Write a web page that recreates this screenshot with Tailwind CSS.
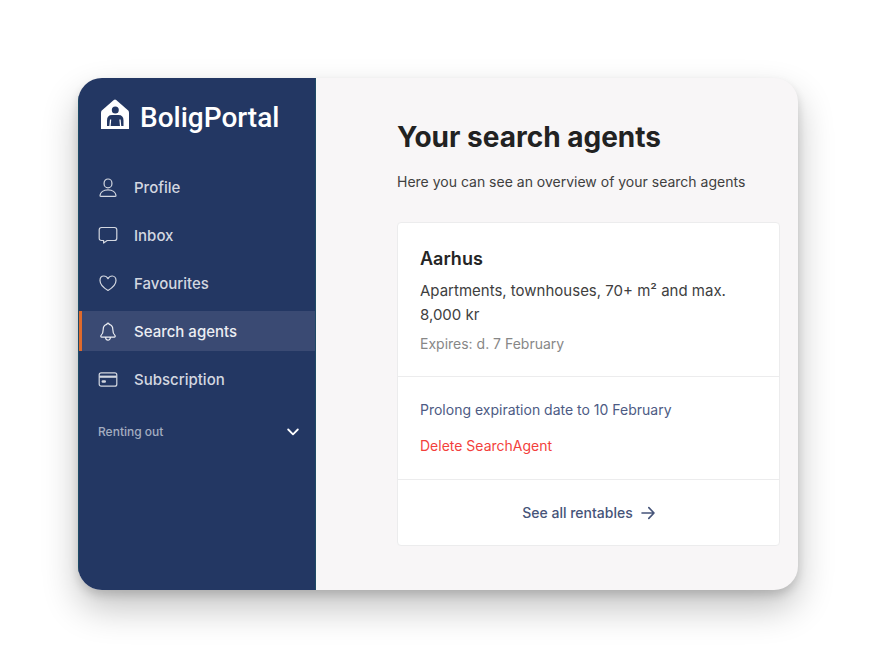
<!DOCTYPE html>
<html lang="en">
<head>
<meta charset="utf-8">
<meta name="viewport" content="width=device-width, initial-scale=1">
<title>BoligPortal – Your search agents</title>
<script src="https://cdn.jsdelivr.net/npm/@tailwindcss/browser@4"></script>
</head>
<body class="min-h-screen bg-white p-[78px] flex font-['Inter','Liberation_Sans',sans-serif]">
<div class="flex flex-1 overflow-hidden rounded-3xl bg-[#f8f6f7] shadow-[0_18px_36px_rgba(0,0,0,0.24),0_5px_10px_rgba(0,0,0,0.14)]">
  <aside class="w-[238px] shrink-0 bg-[#233763] border-x border-[#1d4a66] text-[#d3d7e0]">
    <a href="#" class="flex items-center gap-[11px] pl-[22px] pt-5 h-[60px] text-white" aria-label="BoligPortal home">
      <svg class="mb-2 h-[30px] w-7 shrink-0" viewBox="0 0 28 30" aria-hidden="true">
        <path fill="#fff" d="M12.800 .9Q14 0 15.200 .9L27.200 11.600Q28 12.400 28 13.600V30H0V13.600Q0 12.400 .8 11.600Z"/>
        <circle cx="14.300" cy="11" r="3.500" fill="#233763"/>
        <path fill="#233763" d="M6 27V21.500Q6 16 11 16H17.500Q22.500 16 22.500 21.500V27Z"/>
        <path stroke="#fff" stroke-width="1.300" fill="none" d="M9.600 20.500 9 27M19 20.500 19.600 27"/>
      </svg>
      <span class="font-['Roboto',sans-serif] font-medium text-[28px] leading-9">BoligPortal</span>
    </a>
    <nav class="mt-[29px] flex flex-col gap-2 text-[15px] font-medium leading-5">
      <a href="#" class="flex h-10 items-center gap-4 border-l-3 border-transparent pl-4 pt-px">
        <svg class="size-5" viewBox="0 0 20 20" fill="none" stroke="currentColor" stroke-width="1.200" aria-hidden="true"><rect x="6.100" y="1" width="7.800" height="8.800" rx="3.900"/><path d="M2.900 18.400C2.200 18.400 1.900 18 2 17.400 2.400 14.300 5.500 11.800 10 11.800S17.600 14.300 18 17.400C18.100 18 17.800 18.400 17.100 18.400Z"/></svg>
        Profile</a>
      <a href="#" class="flex h-10 items-center gap-4 border-l-3 border-transparent pl-4 pt-px">
        <svg class="size-5" viewBox="0 0 20 20" fill="none" stroke="currentColor" stroke-width="1.200" stroke-linejoin="round" aria-hidden="true"><path d="M3.500 1.500H16.500Q18.800 1.500 18.800 3.800V12.200Q18.800 14.500 16.500 14.500H9.200L5.600 17V14.500H3.500Q1.200 14.500 1.200 12.200V3.800Q1.200 1.500 3.500 1.500Z"/></svg>
        Inbox</a>
      <a href="#" class="flex h-10 items-center gap-4 border-l-3 border-transparent pl-4 pt-px">
        <svg class="size-5" viewBox="0 0 20 20" fill="none" stroke="currentColor" stroke-width="1.200" stroke-linejoin="round" aria-hidden="true"><path d="M10 4.600C8.900 2.500 7.200 2 5.800 2 3.500 2 2 4 2 6.500 2 10.500 5.500 13.800 10 16.500 14.500 13.800 18 10.500 18 6.500 18 4 16.500 2 14.200 2 12.800 2 11.100 2.500 10 4.600Z"/></svg>
        Favourites</a>
      <a href="#" aria-current="page" class="flex h-10 items-center gap-4 border-l-3 border-[#df6a2c] bg-[#3a4a73] pl-4 pt-px text-[#eceef3]">
        <svg class="size-5" viewBox="0 0 20 20" fill="none" stroke="currentColor" stroke-width="1.200" stroke-linejoin="round" aria-hidden="true"><path d="M8.800 2.400Q8.800 1.200 10 1.200T11.200 2.400C13.700 3 14.800 4.900 14.800 7.500 14.800 10.600 15.300 12 16.900 13.400 17.500 14 17.200 15.200 16.300 15.200H3.700C2.800 15.200 2.500 14 3.100 13.400 4.700 12 5.200 10.600 5.200 7.500 5.200 4.900 6.300 3 8.800 2.400ZM7.600 15.300C7.600 19 12.400 19 12.400 15.300"/></svg>
        Search agents</a>
      <a href="#" class="flex h-10 items-center gap-4 border-l-3 border-transparent pl-4 pt-px">
        <svg class="size-5" viewBox="0 0 20 20" fill="none" stroke="currentColor" stroke-width="1.200" aria-hidden="true"><rect x="1.200" y="2.800" width="17.600" height="13.400" rx="2"/><path d="M1.200 6.700H18.800" stroke-width="2.200"/><path d="M4.800 11.500H6.800" stroke-width="2.400" stroke-linecap="round"/></svg>
        Subscription</a>
    </nav>
    <button type="button" class="mt-[23px] flex w-full items-center justify-between pl-[19px] pr-4 text-xs font-medium leading-5 text-[#a4adc0]">Renting out
      <svg class="size-3" viewBox="0 0 12 12" fill="none" stroke="#fff" stroke-width="1.800" stroke-linecap="round" stroke-linejoin="round" aria-hidden="true"><path d="M1.200 3.500 6 8.300 10.800 3.500"/></svg>
    </button>
  </aside>
  <main class="min-w-0 flex-1 pl-[81px] pr-[18px] pt-[39px] text-sm leading-5 text-[#404040]">
    <h1 class="text-[28px] font-bold leading-10 text-[#222]">Your search agents</h1>
    <p class="mt-[15px]">Here you can see an overview of your search agents</p>
    <section class="mt-[30px] rounded border border-[#ececed] bg-white">
      <div class="px-[22px] pb-[22px] pt-6">
        <h2 class="text-lg font-semibold leading-6 text-[#252525]">Aarhus</h2>
        <p class="mt-2 text-[15px] leading-6">Apartments, townhouses, 70+ m² and max. 8,000 kr</p>
        <p class="mt-[7px] text-[#878787]">Expires: d. 7 February</p>
      </div>
      <div class="flex flex-col items-start gap-4 border-y border-[#ececed] px-[22px] pb-[23px] pt-[23px]">
        <a href="#" class="text-[#4d5b84]">Prolong expiration date to 10 February</a>
        <button type="button" class="text-[#f33f3c]">Delete SearchAgent</button>
      </div>
      <a href="#" class="flex h-[65px] items-center justify-center gap-2 font-medium text-[#465479]">See all rentables
        <svg class="size-[14px]" viewBox="0 0 14 14" fill="none" stroke="currentColor" stroke-width="1.600" stroke-linecap="round" stroke-linejoin="round" aria-hidden="true"><path d="M1 7H13M7.800 1.600 13 7 7.800 12.400"/></svg>
      </a>
    </section>
  </main>
</div>
</body>
</html>
